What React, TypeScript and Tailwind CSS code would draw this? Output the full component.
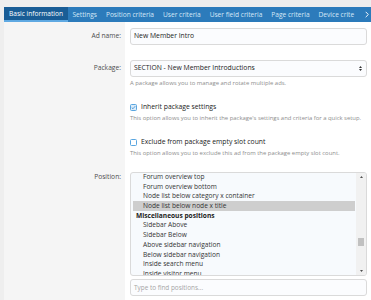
import React from 'react'

const tabs = [
  'Basic information',
  'Settings',
  'Position criteria',
  'User criteria',
  'User field criteria',
  'Page criteria',
  'Device crite',
]

type Item = { label: string; group?: boolean; selected?: boolean }

const positions: Item[] = [
  { label: 'Forum overview top' },
  { label: 'Forum overview bottom' },
  { label: 'Node list below category x container' },
  { label: 'Node list below node x title', selected: true },
  { label: 'Miscellaneous positions', group: true },
  { label: 'Sidebar Above' },
  { label: 'Sidebar Below' },
  { label: 'Above sidebar navigation' },
  { label: 'Below sidebar navigation' },
  { label: 'Inside search menu' },
  { label: 'Inside visitor menu' },
]

function Label({ text }: { text: string }) {
  return (
    <div className="absolute right-[calc(100%+9px)] top-0 h-full flex items-center whitespace-nowrap text-[6.7px] text-[#4d4d4d]">
      {text}
    </div>
  )
}

function Help({ text }: { text: string }) {
  return <div className="mt-[2px] h-[8px] leading-[8px] text-[5.9px] text-[#8d8d8d] whitespace-nowrap">{text}</div>
}

function Check({ checked, text }: { checked?: boolean; text: string }) {
  return (
    <div className="flex items-center h-[10px] gap-[4px] text-[6.8px] text-[#222]">
      <span
        className={
          checked
            ? 'w-[7px] h-[7px] rounded-[1.5px] border border-[#5aa6e0] bg-[#dcecf9] flex items-center justify-center'
            : 'w-[7px] h-[7px] rounded-[1.5px] border border-[#5aa6e0] bg-white'
        }
      >
        {checked && (
          <svg viewBox="0 0 8 8" className="w-[5px] h-[5px]">
            <path d="M1.2 4.2 L3.2 6 L6.8 1.8" fill="none" stroke="#3f8fcf" strokeWidth="1.3" />
          </svg>
        )}
      </span>
      {text}
    </div>
  )
}

export default function App() {
  return (
    <div
      className="w-[371px] h-[300px] overflow-hidden bg-[#eeeeee] pl-[4px] pt-[7px]"
      style={{ fontFamily: '"Open Sans", "Noto Sans", sans-serif' }}
    >
      <div className="flex h-[15px] bg-[#2c7bbb] text-[6.6px] items-stretch">
        {tabs.map((t, i) => (
          <div
            key={t}
            className={
              i === 0
                ? 'flex items-center px-[5px] bg-[#195d96] text-white border-b-2 border-[#5fa9e2] whitespace-nowrap'
                : 'flex items-center px-[4.5px] text-[#d6e8f7] whitespace-nowrap'
            }
          >
            {t}
          </div>
        ))}
        <div className="flex items-center pl-[6px] text-white">
          <svg viewBox="0 0 6 10" className="w-[4px] h-[7px]">
            <path d="M1 1 L5 5 L1 9" fill="none" stroke="white" strokeWidth="1.4" />
          </svg>
        </div>
      </div>

      <div className="flex h-[285px]">
        <div className="w-[121px] shrink-0 bg-[#f5f5f5]" />
        <div className="flex-1 bg-white pl-[5px] pr-[4px] pt-[6px] flex flex-col">
          <div className="relative h-[17px]">
            <Label text="Ad name:" />
            <div className="h-full rounded-[3px] border border-[#dadada] bg-[#fbfcfe] flex items-center px-[3px] text-[6.8px] text-[#222]">
              New Member Intro
            </div>
          </div>

          <div className="relative h-[17px] mt-[15px]">
            <Label text="Package:" />
            <div className="h-full rounded-[3px] border border-[#dadada] bg-[#fbfcfe] flex items-center justify-between px-[3px] text-[6.8px] text-[#222]">
              <span>SECTION - New Member Introductions</span>
              <svg viewBox="0 0 6 10" className="w-[3px] h-[5px] mr-[1px]">
                <path d="M3 0 L6 4 L0 4 Z M0 6 L6 6 L3 10 Z" fill="#333" />
              </svg>
            </div>
          </div>
          <Help text="A package allows you to manage and rotate multiple ads." />

          <div className="mt-[15px]">
            <Check checked text="Inherit package settings" />
          </div>
          <Help text="This option allows you to inherit the package's settings and criteria for a quick setup." />

          <div className="mt-[15px]">
            <Check text="Exclude from package empty slot count" />
          </div>
          <Help text="This option allows you to exclude this ad from the package empty slot count." />

          <div className="relative mt-[15px]">
            <div className="absolute right-[calc(100%+9px)] top-0 whitespace-nowrap text-[6.7px] leading-[9.7px] text-[#4d4d4d]">
              Position:
            </div>
            <div className="h-[104px] rounded-[3px] border border-[#dadada] bg-[#f7fafd] flex overflow-hidden">
              <div className="flex-1 pl-[2px] pr-[1px] -mt-[1px] text-[6.6px] text-[#333]">
                {positions.map((p) => (
                  <div
                    key={p.label}
                    className={
                      p.group
                        ? 'h-[9.7px] leading-[9.7px] pl-[3px] font-bold text-[#222] whitespace-nowrap'
                        : p.selected
                        ? 'h-[9.7px] leading-[9.7px] pl-[10px] bg-[#cecece] whitespace-nowrap'
                        : 'h-[9.7px] leading-[9.7px] pl-[10px] whitespace-nowrap'
                    }
                  >
                    {p.label}
                  </div>
                ))}
              </div>
              <div className="w-[10px] bg-[#f1f1f1] flex flex-col items-center py-[3px]">
                <svg viewBox="0 0 6 4" className="w-[3px] h-[2px]">
                  <path d="M3 0 L6 4 L0 4 Z" fill="#505050" />
                </svg>
                <div className="w-[6px] h-[8px] bg-[#c1c1c1] mt-[60px]" />
                <div className="flex-1" />
                <svg viewBox="0 0 6 4" className="w-[3px] h-[2px]">
                  <path d="M0 0 L6 0 L3 4 Z" fill="#505050" />
                </svg>
              </div>
            </div>
          </div>

          <div className="mt-[3px] h-[17px] rounded-[3px] border border-[#dadada] bg-[#fbfcfe] flex items-center px-[3px] text-[6.4px] text-[#a5a5a5]">
            Type to find positions...
          </div>
        </div>
      </div>
    </div>
  )
}
